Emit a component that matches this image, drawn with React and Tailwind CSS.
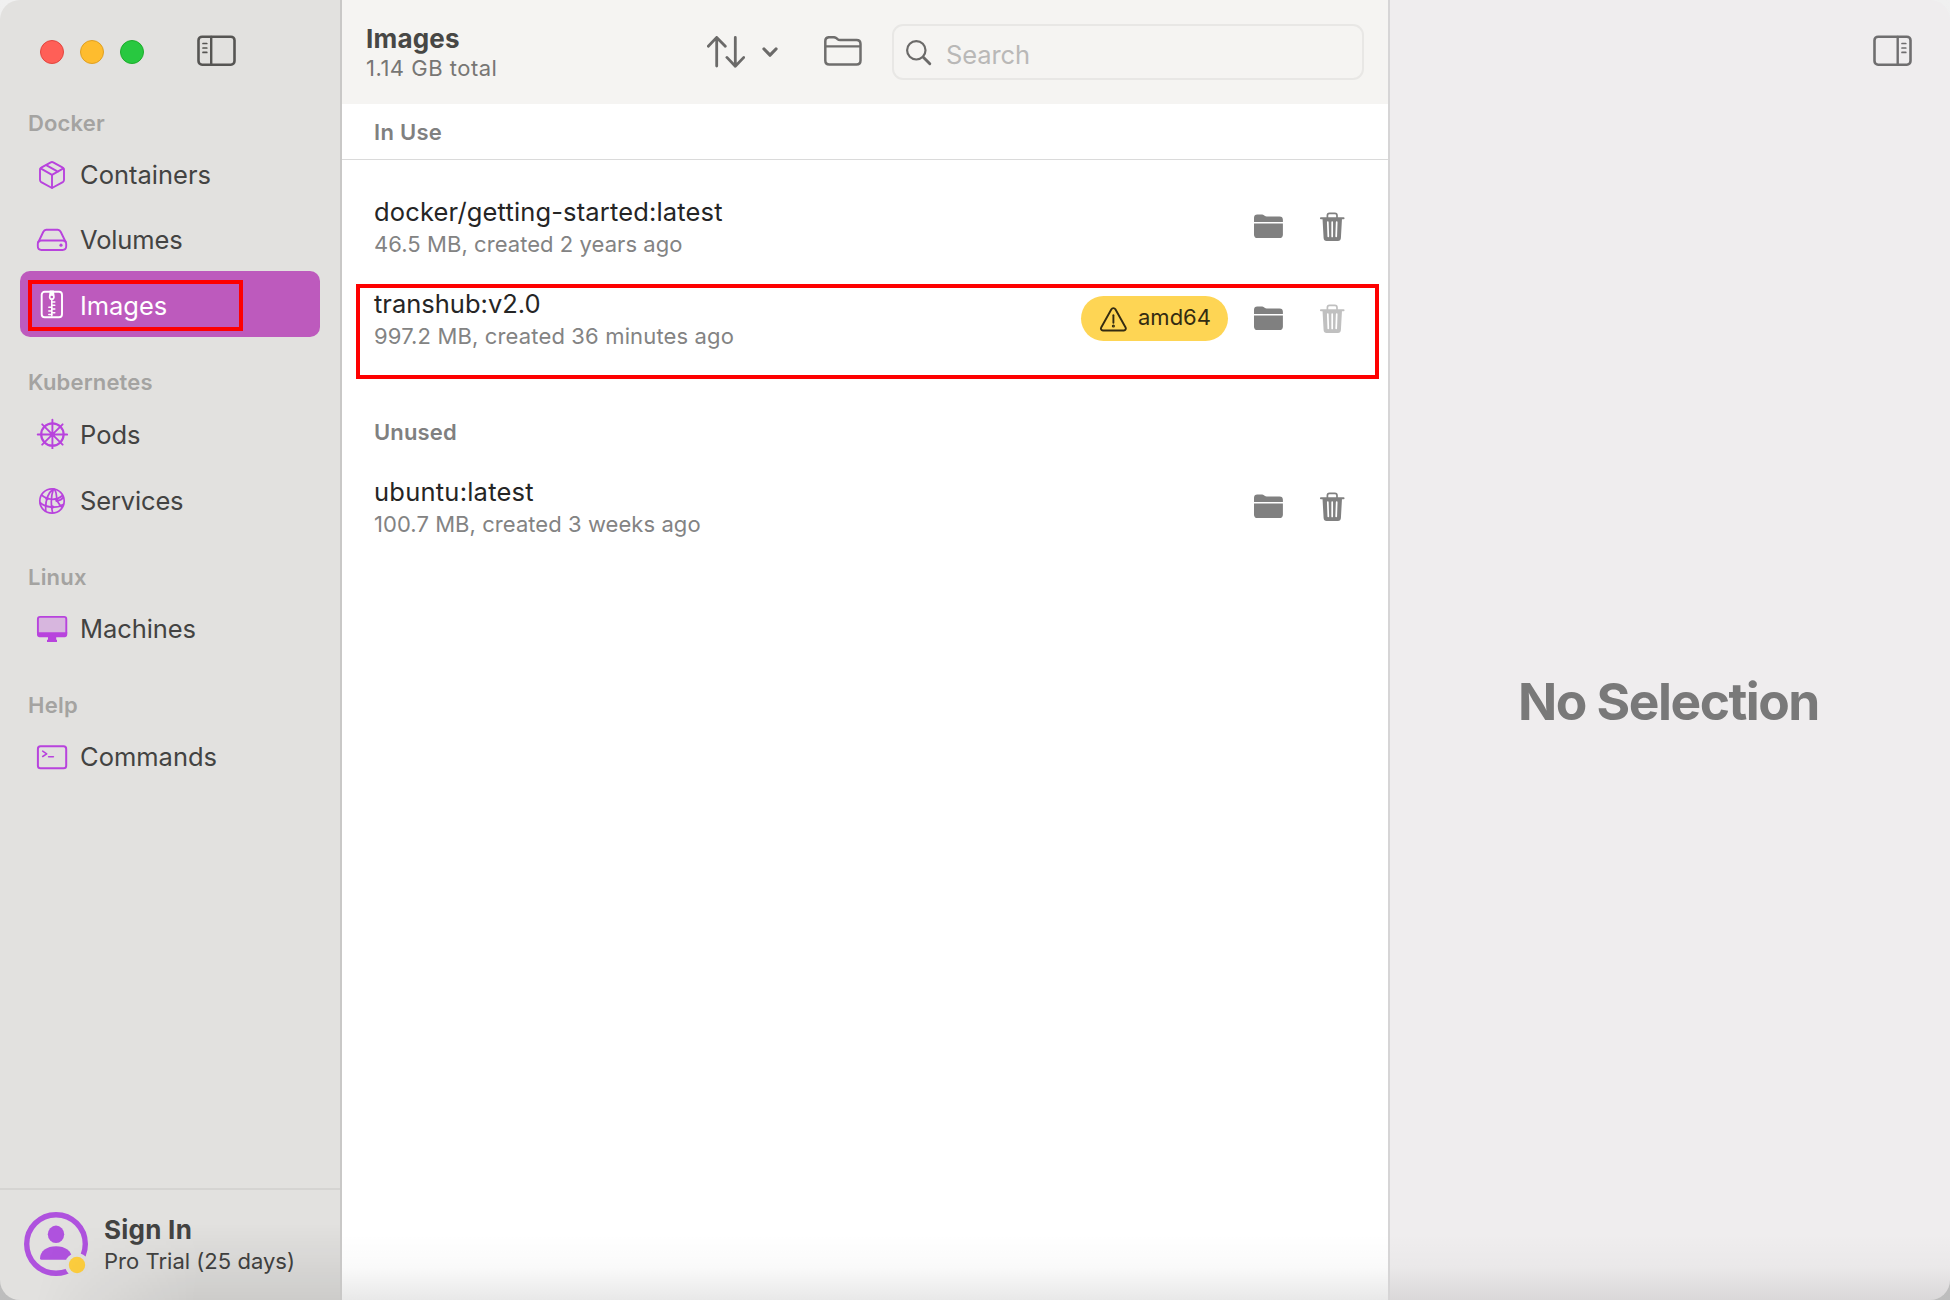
const PURPLE = '#b843dd';

function BoxIcon() {
  return (
    <svg className="size-8" viewBox="0 0 32 32" fill="none" stroke={PURPLE} strokeWidth="1.9" strokeLinejoin="round" strokeLinecap="round">
      <path d="M14.8 5.300a2.600 2.600 0 0 1 2.400 0l9.600 5.300c.8.400 1.200 1 1.200 2v10.500c0 .9-.4 1.500-1.200 2L16 31 5.200 25.100c-.8-.500-1.200-1.100-1.200-2V12.600c0-1 .4-1.600 1.200-2z" />
      <path d="M4.600 11.400 16 17.800l11.400-6.400M16 17.800v13M10.200 8.200l11.600 6.500" />
    </svg>
  );
}

function DriveIcon() {
  return (
    <svg className="size-8" viewBox="0 0 32 32" fill="none" stroke={PURPLE} strokeWidth="1.900" strokeLinejoin="round">
      <path d="M2.200 20.500 7.200 10c.7-1.400 1.400-2.200 3-2.200h11.600c1.600 0 2.300.8 3 2.200L29.900 20.500" />
      <path d="M5.500 18.500h21c2.200 0 3.700 1.500 3.700 3.400v2.400c0 2.200-1.500 3.700-3.700 3.700h-21c-2.200 0-3.700-1.500-3.700-3.700v-2.400c0-1.900 1.500-3.400 3.700-3.400z" />
      <circle cx="25" cy="23.200" r="1.600" fill={PURPLE} stroke="none" />
    </svg>
  );
}

function ZipIcon() {
  return (
    <svg className="size-8" viewBox="0 0 32 32" fill="none" stroke="#fff" strokeWidth="1.900" strokeLinecap="round">
      <rect x="5.700" y="3.700" width="20.300" height="25.600" rx="3" />
      <path d="M15.800 11v17" strokeWidth="1.500" />
      <path d="M12.800 19.200h3M12.800 23h3M12.800 26.600h3M15.800 14h3M15.800 17.300h3M15.800 21h3M15.800 24.800h3" strokeWidth="1.500" />
      <path d="M13.800 2.500h4l.9 5.800a3 3 0 1 1-5.800 0z" fill="#fff" stroke="none" />
      <circle cx="15.800" cy="9" r="1.300" fill="#bd5abd" stroke="none" />
    </svg>
  );
}

function HelmIcon() {
  return (
    <svg className="size-8" viewBox="0 0 32 32" fill="none" stroke={PURPLE} strokeWidth="1.900" strokeLinecap="round">
      <circle cx="16.400" cy="17.500" r="11.200" strokeWidth="2.200" />
      <path d="M16.400 2.800v29.400M1.700 17.500h29.400M6.200 7.300l20.400 20.400M26.600 7.300 6.200 27.700" />
      <circle cx="16.400" cy="17.500" r="2.700" fill={PURPLE} stroke="none" />
    </svg>
  );
}

function NetworkIcon() {
  return (
    <svg className="size-8" viewBox="0 0 32 32" fill="none" stroke={PURPLE} strokeWidth="1.700">
      <circle cx="16" cy="18" r="12.200" />
      <path d="M17.500 5.800C12 10 9 17 9.800 28.500M17.500 5.800c-2.500 7-3 15-.8 24.300M17.500 5.800c3.500 2 2.500 6.500 3.500 11.200 1 3.500 3 5 5 7.500" />
      <path d="M5.500 12c6 5 14.500 6.200 21 .5M3.900 19.500c5.500 5 17 6.500 23.800 1.800M27.500 14c-1.500 2.500-4 3.500-6.500 3.500" />
      <circle cx="11" cy="15.500" r="1.700" fill={PURPLE} stroke="none" />
      <circle cx="21" cy="17.500" r="1.700" fill={PURPLE} stroke="none" />
      <circle cx="16.300" cy="24" r="1.800" fill={PURPLE} stroke="none" />
    </svg>
  );
}

function DesktopIcon() {
  return (
    <svg className="size-8" viewBox="0 0 32 32">
      <rect x="1.900" y="5.900" width="28.400" height="18" rx="2.200" fill={PURPLE} fillOpacity=".27" stroke={PURPLE} strokeWidth="1.900" />
      <path d="M1 21.200h30.200v2.600c0 1.500-1 2.500-2.500 2.500H3.500c-1.500 0-2.500-1-2.500-2.500z" fill={PURPLE} />
      <path d="M12 26h8.200v2.800h.800v2.200H11v-2.200h1z" fill={PURPLE} />
    </svg>
  );
}

function TerminalIcon() {
  return (
    <svg className="size-8" viewBox="0 0 32 32" fill="none" stroke={PURPLE} strokeWidth="2" strokeLinecap="round" strokeLinejoin="round">
      <rect x="1.900" y="7.300" width="28.300" height="22" rx="2.600" />
      <path d="m6.700 12.200 4 2.600-4 2.700M12.600 17.800h4.800" strokeWidth="1.600" />
    </svg>
  );
}

function SidebarToggle({ flipped }) {
  return (
    <svg className="h-[31px] w-[39px]" viewBox="0 0 39 31" fill="none" stroke={flipped ? '#6f6e6f' : '#565553'} strokeLinecap="round">
      <rect x="1.500" y="1.700" width="36" height="28" rx="3.600" strokeWidth="2.600" />
      {flipped ? (
        <path d="M24.700 2v27" strokeWidth="2.400" />
      ) : (
        <path d="M14.200 2v27" strokeWidth="2.400" />
      )}
      {flipped ? (
        <path d="M29 8.500h3.800M29 13h3.800M29 17.400h3.800" strokeWidth="1.700" />
      ) : (
        <path d="M6 8.500h3.800M6 13h3.800M6 17.400h3.800" strokeWidth="1.700" />
      )}
    </svg>
  );
}

function FolderSolid() {
  return (
    <svg className="size-8" viewBox="0 0 32 32" fill="#808080">
      <path d="M2 12V7.800c0-2.200 1.200-3.400 3.300-3.400h4.200c1.200 0 1.900.3 2.700 1l.5.400c.6.500 1.100.6 2 .6h12.900c2.200 0 3.300 1.200 3.300 3.300V12z" />
      <path d="M2 13.500h28.900v10.900c0 2.400-1.200 3.600-3.500 3.600h-22C3.200 28 2 26.800 2 24.400z" />
    </svg>
  );
}

function Trash({ color }) {
  return (
    <svg className="size-8" viewBox="0 0 32 32" fill="none">
      <path d="M11.400 8V5.400c0-1.400.8-2.100 2.100-2.100h5.400c1.300 0 2.100.7 2.100 2.100V8" stroke={color} strokeWidth="1.700" />
      <path d="M4.900 8.300h22.700" stroke={color} strokeWidth="1.900" strokeLinecap="round" />
      <path d="M6.500 8.500h19.500l-1.100 19.400c-.1 1.900-1.200 3-3 3H10.600c-1.800 0-2.900-1.100-3-3z" fill={color} />
      <path d="m11.800 12.200.5 14.200M16.200 12.200v14.200M20.700 12.200l-.5 14.200" stroke="#fff" strokeWidth="1.700" strokeLinecap="round" />
    </svg>
  );
}

const sections = [
  {
    title: 'Docker', head: 'h-9 pt-[3px]', track: 'tracking-[0.17px]',
    items: [
      { label: 'Containers', Icon: BoxIcon, size: 'h-[65px]', track: 'tracking-[0px]' },
      { label: 'Volumes', Icon: DriveIcon, size: 'h-[66px]', track: 'tracking-[-0.15px]' },
      { label: 'Images', Icon: ZipIcon, size: 'h-[66px]', track: 'tracking-[-0.05px]', active: true },
    ],
  },
  {
    title: 'Kubernetes', head: 'mt-[27px] h-9 pt-[2px]', track: 'tracking-[0.18px]',
    items: [
      { label: 'Pods', Icon: HelmIcon, size: 'h-[66px]', track: 'tracking-[0px]' },
      { label: 'Services', Icon: NetworkIcon, size: 'h-[66px]', track: 'tracking-[-0.15px]' },
    ],
  },
  {
    title: 'Linux', head: 'mt-[26px] h-9 pt-[3px]', track: 'tracking-[0.2px]',
    items: [{ label: 'Machines', Icon: DesktopIcon, size: 'h-[66px]', track: 'tracking-[-0.09px]' }],
  },
  {
    title: 'Help', head: 'mt-[26px] h-9 pt-[3px]', track: 'tracking-[0.25px]',
    items: [{ label: 'Commands', Icon: TerminalIcon, size: 'h-[66px]', track: 'tracking-[0px]' }],
  },
];

function Sidebar() {
  return (
    <aside className="relative flex w-[342px] shrink-0 flex-col border-r-2 border-[#c9c8c7] bg-[#e2e1df]">
      <div className="flex h-[104px] items-start pl-10 pt-10">
        <span className="size-6 rounded-full border border-[#e2463f] bg-[#ff5f57]" />
        <span className="ml-4 size-6 rounded-full border border-[#dfa023] bg-[#febc2e]" />
        <span className="ml-4 size-6 rounded-full border border-[#1dad2b] bg-[#28c840]" />
        <span className="ml-[53px] -mt-[5px]"><SidebarToggle /></span>
      </div>
      <nav className="flex-1">
        {sections.map((s) => (
          <section key={s.title}>
            <h2 className={`${s.head} ${s.track} pl-7 text-[22px] font-semibold leading-8 text-[#a4a3a1]`}>{s.title}</h2>
            {s.items.map(({ label, Icon, size, track, active }) => (
              <div key={label} className={`${size} ml-5 flex w-[300px] items-start rounded-[10px] pl-4 ${active ? 'relative bg-[#bd5abd] text-white' : 'text-[#434342]'}`}>
                <span className="mt-[17px]"><Icon /></span>
                <span className={`${track} ml-3 mt-[19px] text-[25.5px] leading-8`}>{label}</span>
                {active && <span className="absolute left-2 top-[9px] h-[51px] w-[215px] border-4 border-[#fe0000]" />}
              </div>
            ))}
          </section>
        ))}
      </nav>
      <footer className="relative flex h-28 items-start border-t-2 border-[#d5d4d2] pl-6">
        <div className="pointer-events-none absolute inset-0 bg-gradient-to-b from-transparent from-30% to-black/9 [mask-image:linear-gradient(100deg,transparent_15%,black_60%)]" />
        <svg className="mt-[22px] size-16" viewBox="0 0 64 64">
          <circle cx="32" cy="32" r="29.300" fill="none" stroke="#af52de" strokeWidth="5.400" />
          <ellipse cx="32" cy="22.300" rx="8.200" ry="8.700" fill="#af52de" />
          <path d="M16 46.500C16 39 23 34.200 32 34.200S48 39 48 46.500c0 .7-.5 1.200-1.200 1.200H17.200c-.7 0-1.200-.5-1.200-1.200z" fill="#af52de" />
          <circle cx="53" cy="53" r="12" fill="#e1e0de" />
          <circle cx="53" cy="53" r="8.200" fill="#fdce3e" />
        </svg>
        <div className="ml-4 mt-[24px] text-[#434342]">
          <div className="text-[26px] font-bold leading-8 tracking-[0.25px]">Sign In</div>
          <div className="text-[22px] leading-[30px] tracking-[0.02px]">Pro Trial (25 days)</div>
        </div>
      </footer>
    </aside>
  );
}

function Toolbar() {
  return (
    <header className="flex h-[104px] items-start bg-[#f5f4f2] pl-6">
      <div className="w-[341px] pt-6">
        <h1 className="text-[26px] font-bold leading-[30px] tracking-[0.2px] text-[#474745]">Images</h1>
        <p className="text-[22px] leading-7 tracking-[0.5px] text-[#777674]">1.14 GB total</p>
      </div>
      <svg className="mt-9 h-8 w-[38px]" viewBox="0 0 38 32" fill="none" stroke="#6b6a69" strokeWidth="2.800" strokeLinecap="round" strokeLinejoin="round">
        <path d="M9.700 30V1.800M1.300 10.200l8.400-8.800 8.600 8.800M28.300 1.400v28.400M19.900 21.400l8.400 8.800 8.500-8.800" />
      </svg>
      <svg className="ml-[17px] mt-[46px] h-3 w-4" viewBox="0 0 16 12" fill="none" stroke="#6b6a69" strokeWidth="3.200" strokeLinecap="round" strokeLinejoin="round">
        <path d="m2 3 6 6.200L14 3" />
      </svg>
      <svg className="ml-[46px] mt-9 h-[30px] w-[38px]" viewBox="0 0 38 30" fill="none" stroke="#6f6e6d" strokeWidth="2.500" strokeLinejoin="round">
        <path d="M1.300 5.200c0-2.600 1.400-4 4-4h4.200c1.400 0 2.200.3 3.200 1.200l.8.700c.8.700 1.500.9 2.600.9h16.400c2.600 0 4 1.400 4 4v16.600c0 2.600-1.400 4-4 4H5.300c-2.600 0-4-1.400-4-4z" />
        <path d="M1.300 10.300h35.200" strokeWidth="2.200" />
      </svg>
      <div className="ml-[30px] mt-6 flex h-14 w-[472px] items-start rounded-[11px] border-2 border-[#e8e7e5] pl-3">
        <svg className="mt-[14px] size-[26px]" viewBox="0 0 26 26" fill="none" stroke="#6b6a69" strokeLinecap="round">
          <circle cx="10.300" cy="10.300" r="9.200" strokeWidth="2.200" />
          <path d="m17.300 17.300 6.500 6.500" strokeWidth="2.900" />
        </svg>
        <span className="ml-[14px] mt-[13px] text-[25.5px] leading-8 tracking-[-0.1px] text-[#b9b8b7]">Search</span>
      </div>
    </header>
  );
}

function ImageRow({ name, track, detail, detailTrack, badge, muted, marked }) {
  return (
    <div className="relative flex h-[92px] items-start pl-8 pr-10">
      <div className="flex-1 pt-[14px]">
        <div className={`${track} text-[25.5px] leading-8 text-[#252525]`}>{name}</div>
        <div className={`${detailTrack} text-[22px] leading-8 text-[#838383]`}>{detail}</div>
      </div>
      <div className="flex h-[88px] items-center">
        {badge && (
          <div className="mr-6 mt-px flex h-[45px] w-[147px] items-center rounded-full bg-[#fed554] pl-[17px] text-[#332b11]">
            <svg className="size-8" viewBox="0 0 32 32" fill="none" stroke="#332b11" strokeWidth="1.900" strokeLinejoin="round" strokeLinecap="round">
              <path d="M13.400 6.300c.8-1.600 3.100-1.600 4 0l10.200 18.200c.7 1.400-.2 3-1.700 3h-21c-1.600 0-2.500-1.600-1.700-3z" />
              <path d="M15.400 12.300v7.400" />
              <circle cx="15.400" cy="23" r=".6" />
            </svg>
            <span className="-mt-[3px] ml-2 text-[22px] leading-8 tracking-[0px]">{badge}</span>
          </div>
        )}
        <FolderSolid />
        <span className="ml-8"><Trash color={muted ? '#c0c0c0' : '#808080'} /></span>
      </div>
      {marked && <span className="absolute left-[14px] right-[9px] top-[10px] h-[95px] border-4 border-[#fe0000]" />}
    </div>
  );
}

export default function App() {
  return (
    <div className="h-[1300px] w-[1950px] bg-gradient-to-b from-[#f0f0f0] to-[#bdbdbd] font-['Inter',sans-serif]">
      <div className="flex h-full overflow-hidden rounded-[20px]">
        <Sidebar />
        <main className="relative flex w-[1046px] shrink-0 flex-col bg-white">
          <Toolbar />
          <h2 className="flex h-14 items-center border-b border-[#dadada] pl-8 text-[22px] font-semibold leading-8 tracking-[0.3px] text-[#808080]">In Use</h2>
          <div className="pt-[22px]">
            <ImageRow name="docker/getting-started:latest" track="tracking-[0.15px]" detail="46.5 MB, created 2 years ago" detailTrack="tracking-[0.06px]" />
            <ImageRow name="transhub:v2.0" track="tracking-[0px]" detail="997.2 MB, created 36 minutes ago" detailTrack="tracking-[0.15px]" badge="amd64" muted marked />
            <h2 className="mb-[10px] mt-[46px] flex h-10 items-center pl-8 text-[22px] font-semibold leading-8 tracking-[0.16px] text-[#808080]">Unused</h2>
            <ImageRow name="ubuntu:latest" track="tracking-[0.23px]" detail="100.7 MB, created 3 weeks ago" detailTrack="tracking-[0.06px]" />
          </div>
          <div className="pointer-events-none absolute inset-x-0 bottom-0 h-[66px] bg-gradient-to-b from-transparent via-black/2 to-black/9" />
        </main>
        <section className="relative flex flex-1 flex-col border-l-2 border-[#d6d5d6] bg-[#efedee]">
          <div className="flex justify-end pr-[38px] pt-[35px]"><SidebarToggle flipped /></div>
          <div className="flex flex-1 items-center justify-center pr-[3px] pt-[36px]">
            <p className="text-[51.5px] font-[650] leading-[64px] tracking-[-1.5px] text-[#797979]">No Selection</p>
          </div>
          <div className="pointer-events-none absolute inset-x-0 bottom-0 h-[66px] bg-gradient-to-b from-transparent via-black/2 to-black/9" />
        </section>
      </div>
    </div>
  );
}
